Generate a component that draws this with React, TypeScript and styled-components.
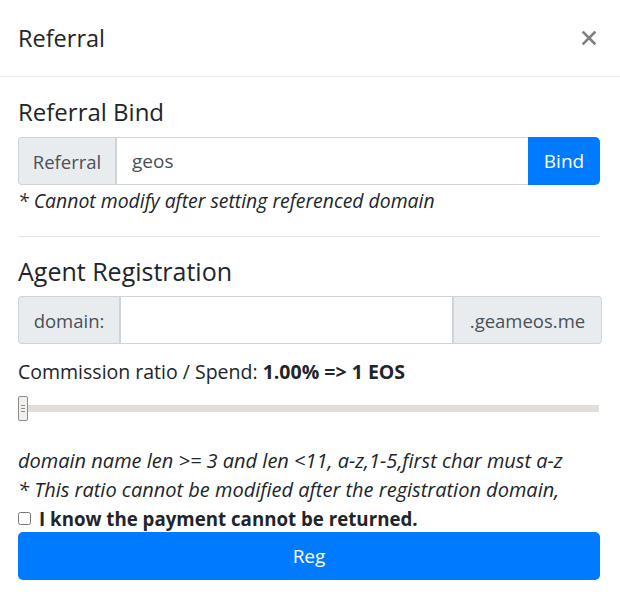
import React from "react";
import styled, { createGlobalStyle } from "styled-components";

const Global = createGlobalStyle`
  html, body { margin: 0; padding: 0; background: #fff; }
  body { font-family: "Open Sans", "Noto Sans", sans-serif; color: #212529; }
  * { box-sizing: border-box; }
`;

const Modal = styled.div`
  width: 620px;
  background: #fff;
`;

const Header = styled.div`
  height: 77px;
  padding: 0 23px 0 18px;
  display: flex;
  align-items: center;
  justify-content: space-between;
  border-bottom: 1px solid #e9ecef;
`;

const Title = styled.h5`
  margin: 0;
  font-size: 23.5px;
  font-weight: 400;
  line-height: 1.2;
  color: #212529;
`;

const Close = styled.button`
  border: 0;
  background: transparent;
  padding: 0;
  width: 16px;
  height: 16px;
  display: flex;
  align-items: center;
  justify-content: center;
  cursor: pointer;
`;

const Body = styled.div`
  padding: 20px 20px 18px 18px;
  display: flex;
  flex-direction: column;
`;

const SectionTitle = styled.h4<{ $mb: number; $size: number }>`
  margin: 0 0 ${(p) => p.$mb}px 0;
  font-size: ${(p) => p.$size}px;
  font-weight: 400;
  line-height: 29px;
  color: #212529;
`;

const Group = styled.div<{ $extra?: number }>`
  display: flex;
  height: 48px;
  margin-right: ${(p) => -(p.$extra || 0)}px;
`;

const Addon = styled.div<{ $w: number; $side: "left" | "right" }>`
  width: ${(p) => p.$w}px;
  flex: none;
  display: flex;
  align-items: center;
  justify-content: center;
  background: #e9ecef;
  border: 1px solid #ced4da;
  color: #495057;
  font-size: 18.5px;
  border-radius: ${(p) => (p.$side === "left" ? "4px 0 0 4px" : "0 4px 4px 0")};
  ${(p) => (p.$side === "left" ? "border-right: 2px solid #ced4da;" : "border-left: 2px solid #ced4da;")}
`;

const Field = styled.input`
  flex: 1;
  min-width: 0;
  height: 100%;
  border: 1px solid #ced4da;
  border-left: 0;
  border-right: 0;
  padding: 0 15px;
  font-family: inherit;
  font-size: 19px;
  color: #495057;
  outline: none;
  &::placeholder { color: #6c757d; }
`;

const PrimaryButton = styled.button<{ $full?: boolean }>`
  border: 0;
  background: #007bff;
  color: #fff;
  font-family: inherit;
  font-size: 19px;
  height: 48px;
  border-radius: ${(p) => (p.$full ? "5px" : "0 5px 5px 0")};
  width: ${(p) => (p.$full ? "100%" : "72px")};
  flex: none;
  cursor: pointer;
`;

const Note = styled.div<{ $mt: number }>`
  margin-top: ${(p) => p.$mt}px;
  font-style: italic;
  font-size: 19.4px;
  line-height: 28px;
  color: #212529;
  white-space: nowrap;
`;

const Rule = styled.hr`
  margin: 21px 0 20px 0;
  border: 0;
  border-top: 1px solid #e5e5e5;
`;

const Ratio = styled.div`
  margin-top: 15px;
  font-size: 19.5px;
  line-height: 26px;
  white-space: nowrap;
  b { font-weight: 700; }
`;

const Slider = styled.div`
  position: relative;
  margin-top: 11px;
  height: 25px;
  display: flex;
  align-items: center;
`;

const Track = styled.div`
  width: 100%;
  height: 7px;
  margin-right: 1px;
  background: #e2ded9;
`;

const Handle = styled.div`
  position: absolute;
  left: 0;
  top: 0;
  width: 10px;
  height: 25px;
  background: #f2f0ed;
  border: 1px solid #8c8c8c;
  border-radius: 2px;
  display: flex;
  flex-direction: column;
  align-items: center;
  justify-content: center;
  gap: 2px;
  span { width: 4px; height: 1px; background: #8c8c8c; }
`;

const Hints = styled.div`
  margin-top: 25px;
  font-style: italic;
  font-size: 20px;
  line-height: 29px;
  white-space: nowrap;
`;

const Check = styled.label`
  display: flex;
  align-items: center;
  height: 28px;
  font-size: 18.7px;
  font-weight: 700;
  gap: 8px;
  white-space: nowrap;
  input { margin: 0; width: 13px; height: 13px; }
`;

export default function App() {
  return (
    <>
      <Global />
      <Modal>
        <Header>
          <Title>Referral</Title>
          <Close aria-label="close">
            <svg width="14" height="14" viewBox="0 0 14 14">
              <path d="M1.5 1.5 L12.5 12.5 M12.5 1.5 L1.5 12.5" stroke="#808080" strokeWidth="2.6" strokeLinecap="square" />
            </svg>
          </Close>
        </Header>
        <Body>
          <SectionTitle $mb={11} $size={24}>Referral Bind</SectionTitle>
          <Group>
            <Addon $w={99} $side="left">Referral</Addon>
            <Field defaultValue="geos" />
            <PrimaryButton>Bind</PrimaryButton>
          </Group>
          <Note $mt={2}>* Cannot modify after setting referenced domain</Note>
          <Rule />
          <SectionTitle $mb={10} $size={25}>Agent Registration</SectionTitle>
          <Group $extra={2}>
            <Addon $w={103} $side="left">domain:</Addon>
            <Field />
            <Addon $w={150} $side="right">.geameos.me</Addon>
          </Group>
          <Ratio>
            Commission ratio / Spend: <b>1.00% =&gt; 1 EOS</b>
          </Ratio>
          <Slider>
            <Track />
            <Handle>
              <span />
              <span />
              <span />
            </Handle>
          </Slider>
          <Hints>
            domain name len &gt;= 3 and len &lt;11, a-z,1-5,first char must a-z
            <br />* This ratio cannot be modified after the registration domain,
          </Hints>
          <Check>
            <input type="checkbox" />
            I know the payment cannot be returned.
          </Check>
          <PrimaryButton $full>Reg</PrimaryButton>
        </Body>
      </Modal>
    </>
  );
}
